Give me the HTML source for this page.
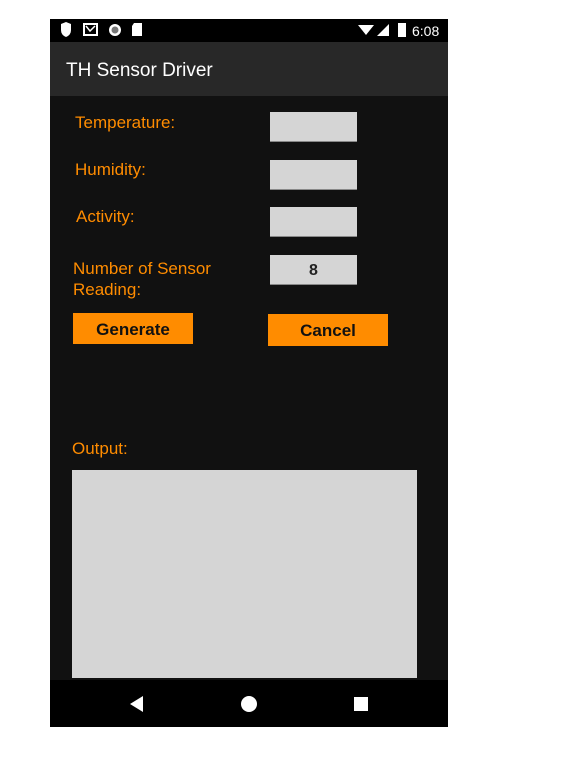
<!DOCTYPE html>
<html><head><style>
body{margin:0;width:573px;height:767px;background:#fff;position:relative;font-family:"Liberation Sans",sans-serif;overflow:hidden}
.a{position:absolute}
.lbl{position:absolute;color:#ff8c00;font-size:17px}
.box{position:absolute;background:#d5d5d5;border-bottom:1px solid #888;width:87px;height:29px;left:270px;font-weight:bold;font-size:16px;color:#222;text-align:center;line-height:31px}
.btn{position:absolute;background:#ff8c00;width:120px;height:31px;text-align:center;line-height:33px;font-size:17px;color:#111;font-weight:bold}
</style></head><body>
<div class="a" style="left:50px;top:19px;width:398px;height:708px;background:#111"></div>
<div class="a" style="left:50px;top:19px;width:398px;height:23px;background:#000"></div>
<div class="a" style="left:50px;top:42px;width:398px;height:54px;background:#282828"></div>
<div class="a" style="left:66px;top:60px;color:#fff;font-size:19px">TH Sensor Driver</div>
<svg class="a" style="left:50px;top:19px" width="398" height="23">
<path d="M11 5 L16 3 L21 5 L21 11 Q21 16 16 18 Q11 16 11 11Z" fill="#fff"/>
<rect x="34" y="5" width="13" height="11" fill="none" stroke="#fff" stroke-width="2"/><path d="M36 7 L40 12 L45 7" stroke="#fff" fill="none" stroke-width="1.5"/>
<circle cx="65" cy="11" r="6" fill="#fff"/><circle cx="65" cy="11" r="3.5" fill="#777"/>
<path d="M84 4 L92 4 L92 17 L82 17 L82 7Z" fill="#fff"/>
<path d="M308 6 L324 6 L316 16Z" fill="#fff"/><path d="M327 17 L339 5 L339 17Z" fill="#fff"/>
<rect x="348" y="4" width="8" height="14" fill="#fff"/>
<text x="362" y="17" fill="#fff" font-size="14" font-family="Liberation Sans">6:08</text>
</svg>
<div class="lbl" style="left:75px;top:113px">Temperature:</div>
<div class="lbl" style="left:75px;top:160px">Humidity:</div>
<div class="lbl" style="left:76px;top:207px">Activity:</div>
<div class="lbl" style="left:73px;top:258px;line-height:21px">Number of Sensor<br>Reading:</div>
<div class="box" style="top:112px"></div>
<div class="box" style="top:160px"></div>
<div class="box" style="top:207px"></div>
<div class="box" style="top:255px">8</div>
<div class="btn" style="left:73px;top:313px">Generate</div>
<div class="btn" style="left:268px;top:314px;height:32px">Cancel</div>
<div class="lbl" style="left:72px;top:439px">Output:</div>
<div class="a" style="left:72px;top:470px;width:345px;height:208px;background:#d5d5d5"></div>
<div class="a" style="left:50px;top:680px;width:398px;height:47px;background:#000"></div>
<svg class="a" style="left:50px;top:680px" width="398" height="47">
<path d="M80 24 L93 16 L93 32Z" fill="#fff"/>
<circle cx="199" cy="24" r="8" fill="#fff"/>
<rect x="304" y="17" width="14" height="14" fill="#fff"/>
</svg>
</body></html>
